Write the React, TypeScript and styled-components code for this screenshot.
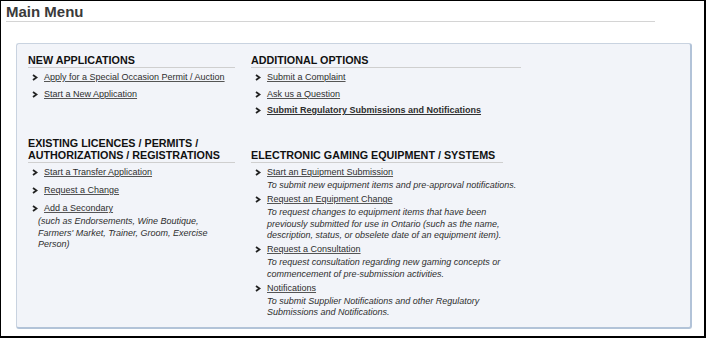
import React from "react";
import styled, { createGlobalStyle } from "styled-components";

const GlobalStyle = createGlobalStyle`
  html, body { margin: 0; padding: 0; background: #ffffff; }
  body { font-family: Arial, "Liberation Sans", Helvetica, sans-serif; }
  * { box-sizing: border-box; }
`;

const Page = styled.div`
  width: 706px;
  height: 338px;
  border-style: solid;
  border-color: #000;
  border-width: 1px 2px 2px 1px;
  background: #fff;
  overflow: hidden;
`;

const Title = styled.h1`
  margin: 2px 0 0 5px;
  width: 649px;
  font-size: 15px;
  line-height: 18px;
  font-weight: bold;
  color: #3a3a3a;
  border-bottom: 1px solid #d4d4d4;
`;

const Panel = styled.div`
  margin: 21px 0 0 15px;
  width: 676px;
  height: 286px;
  background: #f2f4f9;
  border-style: solid;
  border-width: 1px 2px 2px 1px;
  border-color: #c9d3e0 #b2c3d8 #b2c3d8 #c9d3e0;
  border-radius: 3px;
  padding: 10px 0 0 11px;
`;

const Grid = styled.div`
  display: grid;
  grid-template-columns: 207px 270px;
  column-gap: 16px;
`;

const Heading = styled.h2<{ $width?: number; $top?: number }>`
  margin: ${(p) => p.$top ?? 0}px 0 4px 0;
  align-self: end;
  width: ${(p) => (p.$width ? `${p.$width}px` : "auto")};
  font-size: 10.75px;
  line-height: 12px;
  font-weight: bold;
  color: #111;
  padding-bottom: 1px;
  border-bottom: 1px solid #cfcfcf;
  text-transform: uppercase;
`;

const List = styled.ul<{ $gap: number }>`
  list-style: none;
  margin: 0;
  padding: 0 0 0 4px;
  display: flex;
  flex-direction: column;
  gap: ${(p) => p.$gap}px;
  align-self: start;
`;

const Item = styled.li`
  margin: 0;
  padding: 0;
`;

const LinkRow = styled.div`
  display: flex;
  align-items: center;
  gap: 6px;
  height: 11px;
`;

const Chevron = styled.svg`
  width: 6px;
  height: 7px;
  flex: none;
`;

const Link = styled.a<{ $bold?: boolean }>`
  font-size: 9px;
  line-height: 11px;
  color: #2e2e2e;
  font-weight: ${(p) => (p.$bold ? "bold" : "normal")};
  text-decoration: underline;
  text-decoration-color: ${(p) => (p.$bold ? "#333" : "#555")};
  cursor: pointer;
`;

const Desc = styled.p<{ $indent: number }>`
  margin: 2px 0 0 ${(p) => p.$indent}px;
  font-size: 9px;
  line-height: 11.5px;
  font-style: italic;
  color: #2e2e2e;
`;

const Arrow = () => (
  <Chevron viewBox="0 0 6 7">
    <polyline points="1,1 4.5,3.5 1,6" fill="none" stroke="#222" strokeWidth="1.8" />
  </Chevron>
);

type Entry = { label: string; bold?: boolean; desc?: string[] };

const Links = ({ items, indent, gap }: { items: Entry[]; indent: number; gap: number }) => (
  <List $gap={gap}>
    {items.map((it) => (
      <Item key={it.label}>
        <LinkRow>
          <Arrow />
          <Link $bold={it.bold}>{it.label}</Link>
        </LinkRow>
        {it.desc && (
          <Desc $indent={indent}>
            {it.desc.map((d, i) => (
              <React.Fragment key={i}>
                {d}
                {i < it.desc!.length - 1 && <br />}
              </React.Fragment>
            ))}
          </Desc>
        )}
      </Item>
    ))}
  </List>
);

export default function App() {
  return (
    <>
      <GlobalStyle />
      <Page>
        <Title>Main Menu</Title>
        <Panel>
          <Grid>
            <Heading>New Applications</Heading>
            <Heading $width={270}>Additional Options</Heading>
            <Links
              indent={6}
              gap={5.5}
              items={[
                { label: "Apply for a Special Occasion Permit / Auction" },
                { label: "Start a New Application" },
              ]}
            />
            <Links
              indent={12}
              gap={5.5}
              items={[
                { label: "Submit a Complaint" },
                { label: "Ask us a Question" },
                { label: "Submit Regulatory Submissions and Notifications", bold: true },
              ]}
            />
            <Heading $top={21}>
              Existing Licences / Permits /<br />Authorizations / Registrations
            </Heading>
            <Heading $top={21} $width={252}>
              Electronic Gaming Equipment / Systems
            </Heading>
            <Links
              indent={6}
              gap={7}
              items={[
                { label: "Start a Transfer Application" },
                { label: "Request a Change" },
                {
                  label: "Add a Secondary",
                  desc: [
                    "(such as Endorsements, Wine Boutique,",
                    "Farmers' Market, Trainer, Groom, Exercise",
                    "Person)",
                  ],
                },
              ]}
            />
            <Links
              indent={12}
              gap={2.5}
              items={[
                {
                  label: "Start an Equipment Submission",
                  desc: ["To submit new equipment items and pre-approval notifications."],
                },
                {
                  label: "Request an Equipment Change",
                  desc: [
                    "To request changes to equipment items that have been",
                    "previously submitted for use in Ontario (such as the name,",
                    "description, status, or obselete date of an equipment item).",
                  ],
                },
                {
                  label: "Request a Consultation",
                  desc: [
                    "To request consultation regarding new gaming concepts or",
                    "commencement of pre-submission activities.",
                  ],
                },
                {
                  label: "Notifications",
                  desc: [
                    "To submit Supplier Notifications and other Regulatory",
                    "Submissions and Notifications.",
                  ],
                },
              ]}
            />
          </Grid>
        </Panel>
      </Page>
    </>
  );
}
